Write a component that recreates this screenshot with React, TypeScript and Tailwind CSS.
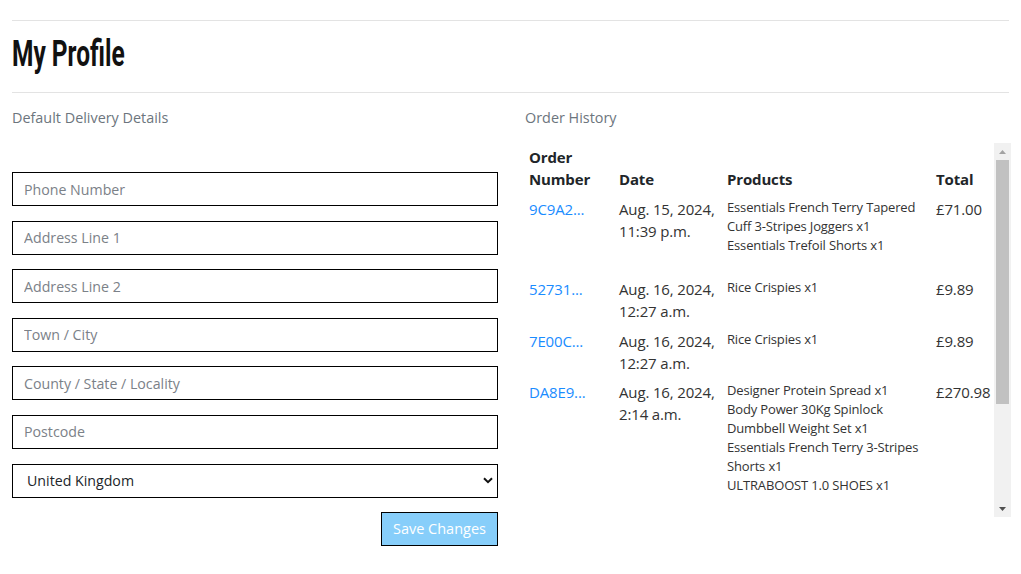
import React from 'react';

interface Order {
  id: string;
  date: string[];
  products: string[];
  total: string;
}

const ORDERS: Order[] = [
  {
    id: '9C9A2...',
    date: ['Aug. 15, 2024,', '11:39 p.m.'],
    products: ['Essentials French Terry Tapered Cuff 3-Stripes Joggers x1', 'Essentials Trefoil Shorts x1'],
    total: '£71.00',
  },
  { id: '52731...', date: ['Aug. 16, 2024,', '12:27 a.m.'], products: ['Rice Crispies x1'], total: '£9.89' },
  { id: '7E00C...', date: ['Aug. 16, 2024,', '12:27 a.m.'], products: ['Rice Crispies x1'], total: '£9.89' },
  {
    id: 'DA8E9...',
    date: ['Aug. 16, 2024,', '2:14 a.m.'],
    products: [
      'Designer Protein Spread x1',
      'Body Power 30Kg Spinlock Dumbbell Weight Set x1',
      'Essentials French Terry 3-Stripes Shorts x1',
      'ULTRABOOST 1.0 SHOES x1',
    ],
    total: '£270.98',
  },
];

const FIELDS = ['Phone Number', 'Address Line 1', 'Address Line 2', 'Town / City', 'County / State / Locality', 'Postcode'];

// classic-looking scrollbar beside the order table
function ScrollBar() {
  return (
    <div className="flex w-[17px] shrink-0 flex-col bg-[#f1f1f1]">
      <div className="flex h-[17px] items-center justify-center">
        <svg width="7" height="4" viewBox="0 0 7 4">
          <path d="M0 4 3.5 0 7 4Z" fill="#a3a3a3" />
        </svg>
      </div>
      <div className="flex-1 px-[2px]">
        <div className="h-[244px] bg-[#c1c1c1]" />
      </div>
      <div className="flex h-[17px] items-center justify-center">
        <svg width="7" height="4" viewBox="0 0 7 4">
          <path d="M0 0 3.5 4 7 0Z" fill="#505050" />
        </svg>
      </div>
    </div>
  );
}

export default function App() {
  return (
    <div className="min-h-[574px] bg-white px-3 pt-5 font-['Open_Sans',sans-serif] text-[#212529]">
      <hr className="border-t border-[#e3e3e3]" />
      <div className="flex h-[71px] items-center pb-[5px]">
        <h1 className="origin-left scale-x-[0.68] font-['Roboto',sans-serif] text-[36px] font-bold leading-none text-[#111]">
          My Profile
        </h1>
      </div>
      <hr className="border-t border-[#e3e3e3]" />

      <div className="grid grid-cols-[486px_486px] gap-x-[27px]">
        {/* Delivery details */}
        <div>
          <p className="mt-[15px] text-[14.4px] leading-5 text-[#6c757d]">Default Delivery Details</p>
          <form className="mt-[44px] flex flex-col gap-[14.6px]" onSubmit={(e) => e.preventDefault()}>
            {FIELDS.map((f) => (
              <input
                key={f}
                type="text"
                placeholder={f}
                className="h-[34px] w-full border border-black px-[11px] text-[14.2px] placeholder:text-[#7b8188] focus:outline-none"
              />
            ))}
            <div className="relative">
              <select
                defaultValue="GB"
                className="h-[34px] w-full appearance-none border border-black bg-white pl-[14px] text-[14.2px] text-[#212529] focus:outline-none"
              >
                <option value="GB">United Kingdom</option>
                <option value="IE">Ireland</option>
                <option value="US">United States</option>
              </select>
              <svg
                className="pointer-events-none absolute right-[5px] top-[13px]"
                width="10"
                height="7"
                viewBox="0 0 10 7"
                fill="none"
              >
                <path d="M1 1.2 5 5.2 9 1.2" stroke="#111" strokeWidth="2" />
              </svg>
            </div>
            <div className="flex justify-end">
              <button
                type="submit"
                className="h-[34px] border border-black bg-[#87cefa] px-[11px] text-[14.5px] text-white"
              >
                Save Changes
              </button>
            </div>
          </form>
        </div>

        {/* Order history */}
        <div>
          <p className="mt-[15px] text-[14.4px] leading-5 text-[#6c757d]">Order History</p>
          <div className="mt-[15px] flex h-[374px]">
            <div className="flex-1 overflow-hidden">
              <table className="w-[469px] table-fixed border-collapse text-left text-[15px] leading-[22px] tracking-[-0.15px]">
                <thead>
                  <tr className="align-bottom">
                    <th className="w-[90px] px-1 py-[3px] font-bold">Order Number</th>
                    <th className="w-[108px] px-1 py-[3px] font-bold">Date</th>
                    <th className="w-[209px] px-1 py-[3px] font-bold">Products</th>
                    <th className="px-1 py-[3px] font-bold">Total</th>
                  </tr>
                </thead>
                <tbody>
                  {ORDERS.map((o) => (
                    <tr key={o.id} className="align-top">
                      <td className="px-1 pt-[5px] pb-[2.5px]">
                        <a href="#" className="text-[#1a8cff]">
                          {o.id}
                        </a>
                      </td>
                      <td className="px-1 pt-[5px] pb-[2.5px] text-[#333]">
                        {o.date.map((d) => (
                          <div key={d}>{d}</div>
                        ))}
                      </td>
                      <td className="px-1 pt-[5px] pb-[2.5px] text-[13px] leading-[19px] text-[#333]">
                        <div className="pb-[15.5px]">
                          {o.products.map((p) => (
                            <div key={p}>{p}</div>
                          ))}
                        </div>
                      </td>
                      <td className="px-1 pt-[5px] pb-[2.5px] text-[#333]">{o.total}</td>
                    </tr>
                  ))}
                </tbody>
              </table>
            </div>
            <ScrollBar />
          </div>
        </div>
      </div>
    </div>
  );
}
